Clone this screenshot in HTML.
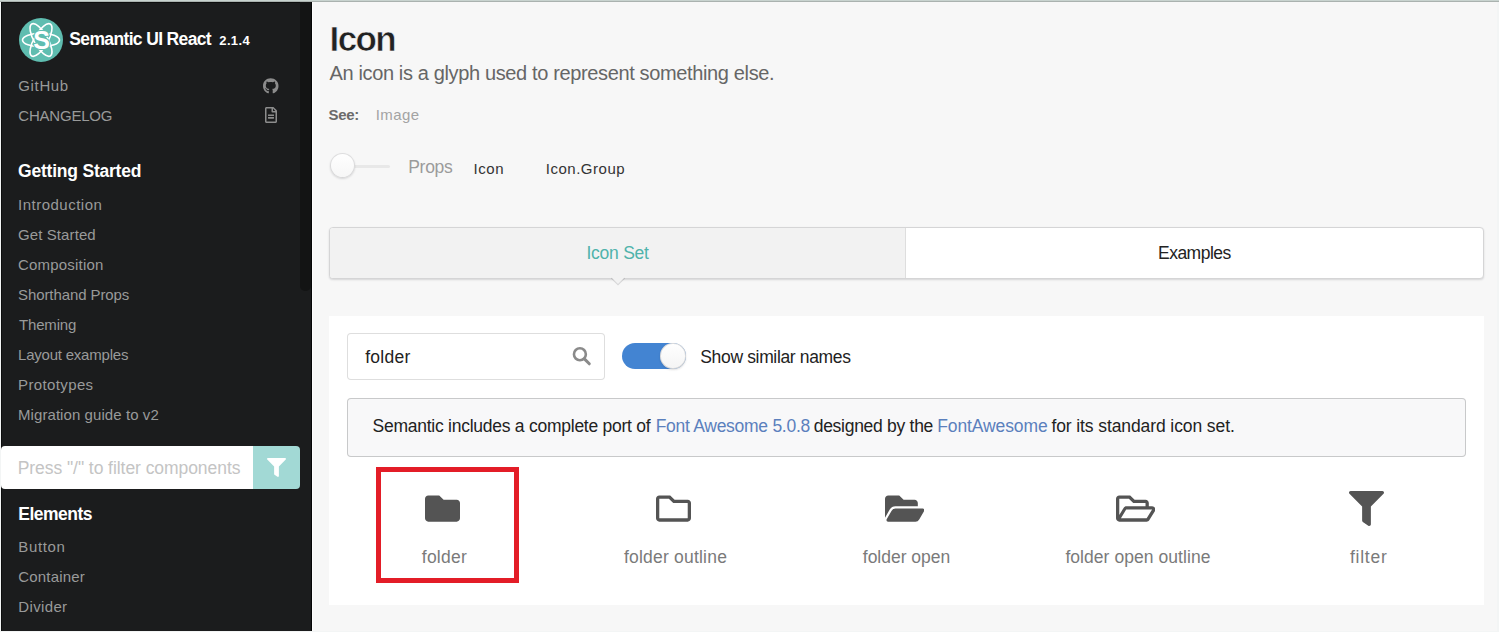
<!DOCTYPE html>
<html><head><meta charset="utf-8"><title>Icon - Semantic UI React</title>
<style>
html,body{margin:0;padding:0;}
body{width:1499px;height:632px;overflow:hidden;position:relative;background:#f3f5f5;font-family:"Liberation Sans", sans-serif;}
span{white-space:pre;}
</style></head><body>
<div style="position:absolute;left:0px;top:0px;width:1499px;height:1px;background:#c8d3cf"></div>
<div style="position:absolute;left:0px;top:1px;width:1499px;height:1px;background:#aab2af"></div>
<div style="position:absolute;left:1px;top:2px;width:311px;height:629px;background:#1b1c1d"></div>
<div style="position:absolute;left:1px;top:2px;width:311px;height:1px;background:#0c0d0d"></div>
<div style="position:absolute;left:1px;top:2px;width:1px;height:629px;background:#0c0d0d"></div>
<div style="position:absolute;left:300px;top:2px;width:11px;height:289px;background:#131414;border-radius:0 0 5px 5px"></div>
<div style="position:absolute;left:311px;top:2px;width:1px;height:629px;background:#050606"></div>
<div style="position:absolute;left:312px;top:2px;width:1px;height:629px;background:#fdfdfd"></div>
<div style="position:absolute;left:313px;top:2px;width:1184px;height:629px;background:#f7f7f7"></div>
<svg style="position:absolute;left:19px;top:18px;width:44px;height:44px" viewBox="0 0 44 44">
<circle cx="22" cy="22" r="22" fill="#5fbdb0"/>
<g fill="none" stroke="#fff" stroke-width="1.6">
<ellipse cx="22" cy="22" rx="18.5" ry="6.8"/>
<ellipse cx="22" cy="22" rx="18.5" ry="6.8" transform="rotate(60 22 22)"/>
<ellipse cx="22" cy="22" rx="18.5" ry="6.8" transform="rotate(120 22 22)"/>
</g>
<text x="22.5" y="30.8" text-anchor="middle" font-family="Liberation Sans" font-weight="700" font-size="25" fill="#fff" stroke="#5fbdb0" stroke-width="2.2" paint-order="stroke">S</text>
</svg>
<svg style="position:absolute;left:263.2px;top:77.6px;width:15.5px;height:16px" viewBox="0 0 496 512"><path fill="#8c8c8c" d="M244.8 8C106.1 8 0 113.3 0 252c0 110.9 69.8 205.8 169.5 239.2 12.8 2.3 17.3-5.6 17.3-12.1 0-6.2-.3-40.4-.3-61.4 0 0-70 15-84.7-29.8 0 0-11.4-29.1-27.8-36.6 0 0-22.9-15.7 1.6-15.4 0 0 24.9 2 38.6 25.8 21.9 38.6 58.6 27.5 72.9 20.9 2.3-16 8.8-27.1 16-33.7-55.9-6.2-112.3-14.3-112.3-110.5 0-27.5 7.6-41.3 23.6-58.9-2.6-6.5-11.1-33.3 2.6-67.9 20.9-6.5 69 27 69 27 20-5.6 41.5-8.5 62.8-8.5s42.8 2.9 62.8 8.5c0 0 48.1-33.6 69-27 13.7 34.7 5.2 61.4 2.6 67.9 16 17.7 25.8 31.5 25.8 58.9 0 96.5-58.9 104.2-114.8 110.5 9.2 7.9 17 22.9 17 46.4 0 33.7-.3 75.4-.3 82 0 6.5 4.6 14.4 17.3 12.1C428.2 457.8 496 362.9 496 252 496 113.3 383.5 8 244.8 8z"/></svg>
<svg style="position:absolute;left:264.7px;top:107.3px;width:12px;height:16px" viewBox="0 0 384 512"><path fill="#8c8c8c" d="M288 248v28c0 6.6-5.4 12-12 12H108c-6.6 0-12-5.4-12-12v-28c0-6.6 5.4-12 12-12h168c6.6 0 12 5.4 12 12zm-12 72H108c-6.6 0-12 5.4-12 12v28c0 6.6 5.4 12 12 12h168c6.6 0 12-5.4 12-12v-28c0-6.6-5.4-12-12-12zm108-188.1V464c0 26.5-21.5 48-48 48H48c-26.5 0-48-21.5-48-48V48C0 21.5 21.5 0 48 0h204.1C264.8 0 277 5.1 286 14.1L369.9 98c9 8.9 14.1 21.2 14.1 33.9zm-128-80V128h76.1L256 51.9zM336 464V176H232c-13.3 0-24-10.7-24-24V48H48v416h288z"/></svg>
<div style="position:absolute;left:1px;top:446px;width:252px;height:43px;background:#fff;border-radius:4px 0 0 4px"></div>
<div style="position:absolute;left:253px;top:446px;width:47px;height:43px;background:#a2d9d5;border-radius:0 4px 4px 0"></div>
<svg style="position:absolute;left:267px;top:457.8px;width:19px;height:19px" viewBox="0 0 512 512"><path fill="#ffffff" d="M487.976 0H24.028C2.71 0-8.047 25.866 7.058 40.971L192 225.941V432c0 7.831 3.821 15.17 10.237 19.662l80 55.98C298.02 518.69 320 507.493 320 487.98V225.941l184.947-184.97C520.021 25.896 509.338 0 487.976 0z"/></svg>
<div style="position:absolute;left:330px;top:165.2px;width:60px;height:2.4px;background:#e8e8e8;border-radius:2px"></div>
<div style="position:absolute;left:329.5px;top:153.3px;width:25.2px;height:25.2px;background:linear-gradient(#fff,#f6f6f6);border-radius:50%;box-shadow:0 1px 2px 0 rgba(34,36,38,.15),0 0 0 1px rgba(34,36,38,.15) inset"></div>
<div style="position:absolute;left:329px;top:227px;width:1155px;height:52px;box-sizing:border-box;background:#fff;border:1px solid #d5d5d6;border-radius:4px;box-shadow:0 1px 2px 0 rgba(34,36,38,.15)"></div>
<div style="position:absolute;left:330px;top:228px;width:575px;height:50px;background:#f2f2f2;border-radius:3px 0 0 3px"></div>
<div style="position:absolute;left:905px;top:228px;width:1px;height:50px;background:#dedede"></div>
<div style="position:absolute;left:613px;top:272.2px;width:10px;height:10px;background:#f2f2f2;transform:rotate(45deg);box-shadow:1px 1px 0 0 rgba(34,36,38,.15)"></div>
<div style="position:absolute;left:329px;top:316px;width:1155px;height:289px;background:#fff"></div>
<div style="position:absolute;left:347px;top:333px;width:258px;height:46.6px;background:#fff;border-radius:4px;box-shadow:0 0 0 1px #dedede inset"></div>
<svg style="position:absolute;left:570px;top:345px;width:24px;height:24px" viewBox="0 0 24 24"><circle cx="9.9" cy="9.25" r="5.95" fill="none" stroke="#8a8a8a" stroke-width="2.6"/><path d="M14.4 13.9L19.3 18.8" stroke="#8a8a8a" stroke-width="3" stroke-linecap="round"/></svg>
<div style="position:absolute;left:622px;top:343px;width:63.5px;height:25.5px;background:#4384d2;border-radius:13px"></div>
<div style="position:absolute;left:660px;top:343px;width:25.5px;height:25.5px;background:linear-gradient(#fff,#f4f4f4);border-radius:50%;box-shadow:0 1px 2px 0 rgba(34,36,38,.15),0 0 0 1px rgba(34,36,38,.15) inset"></div>
<div style="position:absolute;left:347px;top:398px;width:1119px;height:58.5px;background:#f8f8f9;border-radius:4px;box-shadow:0 0 0 1px rgba(34,36,38,.22) inset"></div>
<div style="position:absolute;left:376px;top:467px;width:133px;height:106px;border:5px solid #e31d27"></div>
<svg style="position:absolute;left:424.8px;top:491.23px;width:35px;height:35px" viewBox="0 0 512 512"><path fill="#545454" d="M464 128H272l-64-64H48C21.49 64 0 85.49 0 112v288c0 26.51 21.49 48 48 48h416c26.51 0 48-21.49 48-48V176c0-26.51-21.49-48-48-48z"/></svg>
<svg style="position:absolute;left:656px;top:491.23px;width:35px;height:35px" viewBox="0 0 512 512"><path fill="#545454" d="M464 128H272l-64-64H48C21.49 64 0 85.49 0 112v288c0 26.51 21.49 48 48 48h416c26.51 0 48-21.49 48-48V176c0-26.51-21.49-48-48-48zm-6 272H54c-3.3 0-6-2.7-6-6V118c0-3.3 2.7-6 6-6h134.1l64 64H458c3.3 0 6 2.7 6 6v212c0 3.3-2.7 6-6 6z"/></svg>
<svg style="position:absolute;left:884.6px;top:491.23px;width:39.375px;height:35px" viewBox="0 0 576 512"><path fill="#545454" d="M572.694 292.093L500.27 416.248A63.997 63.997 0 0 1 444.989 448H45.025c-18.523 0-30.064-20.093-20.731-36.093l72.424-124.155A64 64 0 0 1 152 256h399.964c18.523 0 30.064 20.093 20.73 36.093zM152 224h328v-48c0-26.51-21.49-48-48-48H272l-64-64H48C21.49 64 0 85.49 0 112v278.046l69.077-118.418C86.214 242.25 117.989 224 152 224z"/></svg>
<svg style="position:absolute;left:1115.7px;top:491.23px;width:39.375px;height:35px" viewBox="0 0 576 512"><path fill="#545454" d="M527.9 224H480v-48c0-26.5-21.5-48-48-48H272l-64-64H48C21.5 64 0 85.5 0 112v288c0 26.5 21.5 48 48 48h400c16.5 0 31.9-8.5 40.7-22.6l79.9-128c20-31.9-3-73.4-40.7-73.4zM48 118c0-3.3 2.7-6 6-6h134.1l64 64H426c3.3 0 6 2.7 6 6v42H152c-16.8 0-32.4 8.8-41.1 23.2L48 351.4zm400 282H72l77.2-128H528z"/></svg>
<svg style="position:absolute;left:1348.7px;top:491.4px;width:35px;height:35px" viewBox="0 0 512 512"><path fill="#545454" d="M487.976 0H24.028C2.71 0-8.047 25.866 7.058 40.971L192 225.941V432c0 7.831 3.821 15.17 10.237 19.662l80 55.98C298.02 518.69 320 507.493 320 487.98V225.941l184.947-184.97C520.021 25.896 509.338 0 487.976 0z"/></svg>
<span style="position:absolute;left:69.3px;top:30.7px;font-size:17.5px;line-height:17.5px;font-weight:700;letter-spacing:-0.644px;color:#ffffff">Semantic UI React</span>
<span style="position:absolute;left:219.3px;top:33.7px;font-size:13px;line-height:13px;font-weight:700;letter-spacing:0.35px;color:#ffffff">2.1.4</span>
<span style="position:absolute;left:18.3px;top:78.0px;font-size:15px;line-height:15px;font-weight:400;letter-spacing:0.64px;color:#999a9a">GitHub</span>
<span style="position:absolute;left:18.3px;top:108.0px;font-size:15px;line-height:15px;font-weight:400;letter-spacing:-0.213px;color:#999a9a">CHANGELOG</span>
<span style="position:absolute;left:18.1px;top:163.4px;font-size:17.5px;line-height:17.5px;font-weight:700;letter-spacing:-0.221px;color:#ffffff">Getting Started</span>
<span style="position:absolute;left:18.0px;top:197.0px;font-size:15px;line-height:15px;font-weight:400;letter-spacing:0.5px;color:#999a9a">Introduction</span>
<span style="position:absolute;left:18.0px;top:227.0px;font-size:15px;line-height:15px;font-weight:400;letter-spacing:0.1px;color:#999a9a">Get Started</span>
<span style="position:absolute;left:18.0px;top:257.0px;font-size:15px;line-height:15px;font-weight:400;letter-spacing:0.2px;color:#999a9a">Composition</span>
<span style="position:absolute;left:18.0px;top:287.0px;font-size:15px;line-height:15px;font-weight:400;letter-spacing:-0.086px;color:#999a9a">Shorthand Props</span>
<span style="position:absolute;left:19.0px;top:317.0px;font-size:15px;line-height:15px;font-weight:400;letter-spacing:-0.167px;color:#999a9a">Theming</span>
<span style="position:absolute;left:18.0px;top:347.0px;font-size:15px;line-height:15px;font-weight:400;letter-spacing:-0.214px;color:#999a9a">Layout examples</span>
<span style="position:absolute;left:18.0px;top:377.0px;font-size:15px;line-height:15px;font-weight:400;letter-spacing:0.378px;color:#999a9a">Prototypes</span>
<span style="position:absolute;left:18.0px;top:407.0px;font-size:15px;line-height:15px;font-weight:400;letter-spacing:0.075px;color:#999a9a">Migration guide to v2</span>
<span style="position:absolute;left:17.7px;top:459.6px;font-size:17.5px;line-height:17.5px;font-weight:400;letter-spacing:-0.059px;color:#c4c4c4">Press "/" to filter components</span>
<span style="position:absolute;left:18.3px;top:506.0px;font-size:17.5px;line-height:17.5px;font-weight:700;letter-spacing:-0.5px;color:#ffffff">Elements</span>
<span style="position:absolute;left:18.3px;top:538.7px;font-size:15px;line-height:15px;font-weight:400;letter-spacing:0.64px;color:#999a9a">Button</span>
<span style="position:absolute;left:18.3px;top:568.6px;font-size:15px;line-height:15px;font-weight:400;letter-spacing:0.175px;color:#999a9a">Container</span>
<span style="position:absolute;left:18.3px;top:599.0px;font-size:15px;line-height:15px;font-weight:400;letter-spacing:0.35px;color:#999a9a">Divider</span>
<span style="position:absolute;left:329.6px;top:21.0px;font-size:35px;line-height:35px;font-weight:700;letter-spacing:-1.633px;color:#222222;-webkit-text-stroke:0.6px #f7f7f7">Icon</span>
<span style="position:absolute;left:329.5px;top:62.9px;font-size:20px;line-height:20px;font-weight:400;letter-spacing:-0.363px;color:#666666">An icon is a glyph used to represent something else.</span>
<span style="position:absolute;left:328.5px;top:106.7px;font-size:15px;line-height:15px;font-weight:700;letter-spacing:-0.3px;color:#6b6b6b">See:</span>
<span style="position:absolute;left:375.7px;top:106.7px;font-size:15px;line-height:15px;font-weight:400;letter-spacing:0.4px;color:#a3a3a3">Image</span>
<span style="position:absolute;left:408.2px;top:158.7px;font-size:17.5px;line-height:17.5px;font-weight:400;letter-spacing:-0.275px;color:#9b9b9b">Props</span>
<span style="position:absolute;left:473.4px;top:161.0px;font-size:15px;line-height:15px;font-weight:400;letter-spacing:0.6px;color:#333333">Icon</span>
<span style="position:absolute;left:545.7px;top:161.0px;font-size:15px;line-height:15px;font-weight:400;letter-spacing:0.533px;color:#333333">Icon.Group</span>
<span style="position:absolute;left:586.5px;top:244.8px;font-size:17.5px;line-height:17.5px;font-weight:400;letter-spacing:-0.257px;color:#4fb3ab">Icon Set</span>
<span style="position:absolute;left:1158.0px;top:245.0px;font-size:17.5px;line-height:17.5px;font-weight:400;letter-spacing:-0.514px;color:#222222">Examples</span>
<span style="position:absolute;left:365.2px;top:348.9px;font-size:17.5px;line-height:17.5px;font-weight:400;letter-spacing:0.28px;color:#222222">folder</span>
<span style="position:absolute;left:700.3px;top:348.8px;font-size:17.5px;line-height:17.5px;font-weight:400;letter-spacing:-0.347px;color:#222222">Show similar names</span>
<span style="position:absolute;left:372.5px;top:418.4px;font-size:17.5px;line-height:17.5px;font-weight:400;letter-spacing:-0.251px;color:#222222">Semantic includes a complete port of</span>
<span style="position:absolute;left:655.7px;top:418.4px;font-size:17.5px;line-height:17.5px;font-weight:400;letter-spacing:-0.276px;color:#5b80bd">Font Awesome 5.0.8</span>
<span style="position:absolute;left:813.7px;top:418.4px;font-size:17.5px;line-height:17.5px;font-weight:400;letter-spacing:-0.279px;color:#222222">designed by the</span>
<span style="position:absolute;left:937.2px;top:418.4px;font-size:17.5px;line-height:17.5px;font-weight:400;letter-spacing:-0.11px;color:#5b80bd">FontAwesome</span>
<span style="position:absolute;left:1051.4px;top:418.4px;font-size:17.5px;line-height:17.5px;font-weight:400;letter-spacing:-0.096px;color:#222222">for its standard icon set.</span>
<span style="position:absolute;left:421.8px;top:548.9px;font-size:17.5px;line-height:17.5px;font-weight:400;letter-spacing:0.24px;color:#7a7a7a">folder</span>
<span style="position:absolute;left:623.9px;top:548.8px;font-size:17.5px;line-height:17.5px;font-weight:400;letter-spacing:0.215px;color:#7a7a7a">folder outline</span>
<span style="position:absolute;left:862.8px;top:548.8px;font-size:17.5px;line-height:17.5px;font-weight:400;letter-spacing:-0.02px;color:#7a7a7a">folder open</span>
<span style="position:absolute;left:1065.4px;top:548.8px;font-size:17.5px;line-height:17.5px;font-weight:400;letter-spacing:0.056px;color:#7a7a7a">folder open outline</span>
<span style="position:absolute;left:1349.9px;top:548.7px;font-size:17.5px;line-height:17.5px;font-weight:400;letter-spacing:0.78px;color:#7a7a7a">filter</span>
</body></html>
